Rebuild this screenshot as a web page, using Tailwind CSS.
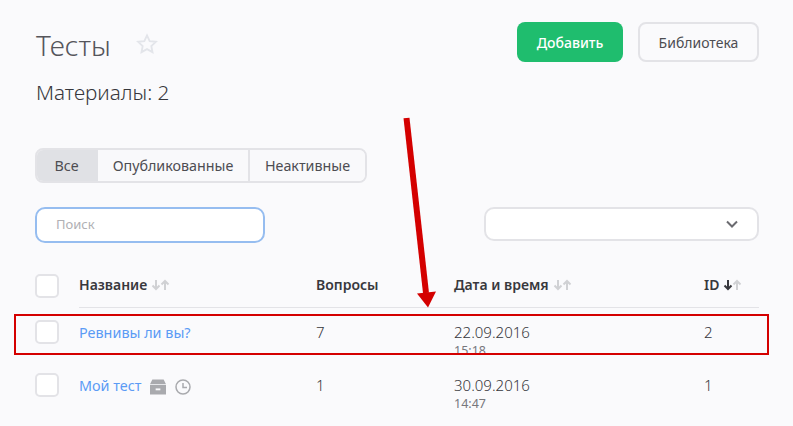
<!DOCTYPE html>
<html lang="ru">
<head>
  <meta charset="UTF-8">
  <title>Тесты</title>
  <script src="https://cdn.jsdelivr.net/npm/@tailwindcss/browser@4"></script>
</head>
<body class="bg-[#fafafc] font-['Noto_Sans',sans-serif] text-[#4d4d52]">
  <div class="relative w-[793px] h-[426px] overflow-hidden pl-[35px] pr-[34px] pt-[22px]">
    <!-- header -->
    <div class="flex justify-between h-[40px]">
      <div class="flex items-center h-[46px] pl-px">
        <h1 class="text-[28px] leading-[46px] font-light text-[#55555b]">Тесты</h1>
        <svg class="ml-[25px] mt-[-2px]" width="22" height="22" viewBox="0 0 24 24" fill="none" stroke="#e3e5ea" stroke-width="2"><path d="M12 2.600l2.900 6.200 6.800.8-5 4.600 1.300 6.700-6-3.300-6 3.300 1.300-6.700-5-4.600 6.800-.8z"/></svg>
      </div>
      <div class="flex gap-[15px]">
        <button class="w-[106px] h-[40px] rounded-[8px] bg-[#1fbd6e] text-white text-[14px] font-medium">Добавить</button>
        <button class="w-[121px] h-[40px] rounded-[8px] border-2 border-[#e3e3e7] bg-[#fafafc] text-[14px]">Библиотека</button>
      </div>
    </div>
    <div class="pl-px mt-[16px] text-[20.7px] leading-[28px] font-light text-[#36363b]">Материалы: 2</div>

    <!-- tabs -->
    <div class="flex w-[332px] h-[35px] mt-[42px] rounded-[8px] border-2 border-[#e3e3e7] overflow-hidden text-[14.3px]">
      <div class="w-[61px] bg-[#e0e1e5] flex items-center justify-center pr-[2px]">Все</div>
      <div class="w-[152px] border-r-2 border-[#e3e3e7] bg-[#f9f9fb] flex items-center justify-center">Опубликованные</div>
      <div class="flex-1 bg-[#f9f9fb] flex items-center justify-center">Неактивные</div>
    </div>

    <!-- filters -->
    <div class="flex justify-between items-start mt-[24px]">
      <div class="w-[230px] h-[36px] rounded-[10px] border-2 border-[#96bdf0] bg-white pl-[19px] flex items-center text-[13px] text-[#b0b0b4]">Поиск</div>
      <div class="w-[275px] h-[34px] rounded-[10px] border-2 border-[#e3e3e7] bg-white flex items-center justify-end pr-[19px]">
        <svg width="12" height="8" viewBox="0 0 12 8" fill="none" stroke="#6b6b70" stroke-width="2"><path d="M1 1.500l5 5 5-5"/></svg>
      </div>
    </div>

    <!-- table -->
    <div class="flex mt-[31px] h-[24px]">
      <div class="w-[24px] h-[24px] rounded-[5px] border-2 border-[#e3e3e7] bg-white"></div>
    </div>
    <div class="absolute left-[79px] top-[274px] w-[680px] h-[34px] border-b border-[#e3e3e7] flex text-[14px] font-semibold text-[#38383d] leading-[22px]">
      <div class="w-[237px] flex items-center h-[22px]">Название
        <svg class="ml-[4px]" width="19" height="12" viewBox="0 0 19 12" fill="none" stroke="#d0d1d4" stroke-width="2"><path d="M5 1v9M1.500 6.500L5 10l3.500-3.500M14 11V2M10.500 5.500L14 2l3.500 3.500"/></svg>
      </div>
      <div class="w-[138px] h-[22px]">Вопросы</div>
      <div class="w-[250px] flex items-center h-[22px]">Дата и время
        <svg class="ml-[4px]" width="19" height="12" viewBox="0 0 19 12" fill="none" stroke="#d0d1d4" stroke-width="2"><path d="M5 1v9M1.500 6.500L5 10l3.500-3.500M14 11V2M10.500 5.500L14 2l3.500 3.500"/></svg>
      </div>
      <div class="flex items-center h-[22px]">ID
        <svg class="ml-[4px]" width="19" height="12" viewBox="0 0 19 12" fill="none" stroke-width="2"><path stroke="#38383d" d="M5 1v9M1.500 6.500L5 10l3.500-3.500"/><path stroke="#d0d1d4" d="M14 11V2M10.500 5.500L14 2l3.500 3.500"/></svg>
      </div>
    </div>

    <div class="absolute left-[35px] top-[320px] w-[724px] flex text-[15px] leading-[20px] font-light text-[#36363b]">
      <div class="w-[44px]"><div class="w-[24px] h-[24px] rounded-[5px] border-2 border-[#e3e3e7] bg-white"></div></div>
      <div class="w-[237px] text-[14.4px] font-normal text-[#5b9bf5] pt-[3px]">Ревнивы ли вы?</div>
      <div class="w-[138px] pt-[2px]">7</div>
      <div class="w-[250px] pt-[2px]">22.09.2016<div class="text-[12.500px] leading-[17px] font-normal text-[#77777c]">15:18</div></div>
      <div class="pt-[2px]">2</div>
    </div>
    <div class="absolute left-[35px] top-[373px] w-[724px] flex text-[15px] leading-[20px] font-light text-[#36363b]">
      <div class="w-[44px]"><div class="w-[24px] h-[24px] rounded-[5px] border-2 border-[#e3e3e7] bg-white"></div></div>
      <div class="w-[237px] text-[14.4px] font-normal text-[#5b9bf5] pt-[3px] flex items-start">Мой тест
        <svg class="ml-[8px] mt-[3px]" width="16" height="16" viewBox="0 0 17 16"><path fill="#a9aaae" d="M2.500 0h12L17 5H0zM0 6h17v10H0z"/><rect x="6" y="9.500" width="5" height="2" fill="#fafafc"/></svg>
        <svg class="ml-[9px] mt-[3px]" width="16" height="16" viewBox="0 0 16 16" fill="none" stroke="#a9aaae" stroke-width="1.500"><circle cx="8" cy="8" r="7"/><path d="M8 4v4.500h4"/></svg>
      </div>
      <div class="w-[138px] pt-[2px]">1</div>
      <div class="w-[250px] pt-[2px]">30.09.2016<div class="text-[12.500px] leading-[17px] font-normal text-[#77777c]">14:47</div></div>
      <div class="pt-[2px]">1</div>
    </div>

    <!-- annotation over the screenshot -->
    <div class="absolute left-[14px] top-[313.500px] w-[755px] h-[41px] border-[2.500px] border-[#d40000]"></div>
    <svg class="absolute left-0 top-0 pointer-events-none" width="793" height="426" viewBox="0 0 793 426">
      <path d="M406.500 118l19.500 175" stroke="#d40000" stroke-width="6" fill="none"/>
      <path d="M417 293.500l19-2-8 16z" fill="#d40000"/>
    </svg>
  </div>
</body>
</html>
